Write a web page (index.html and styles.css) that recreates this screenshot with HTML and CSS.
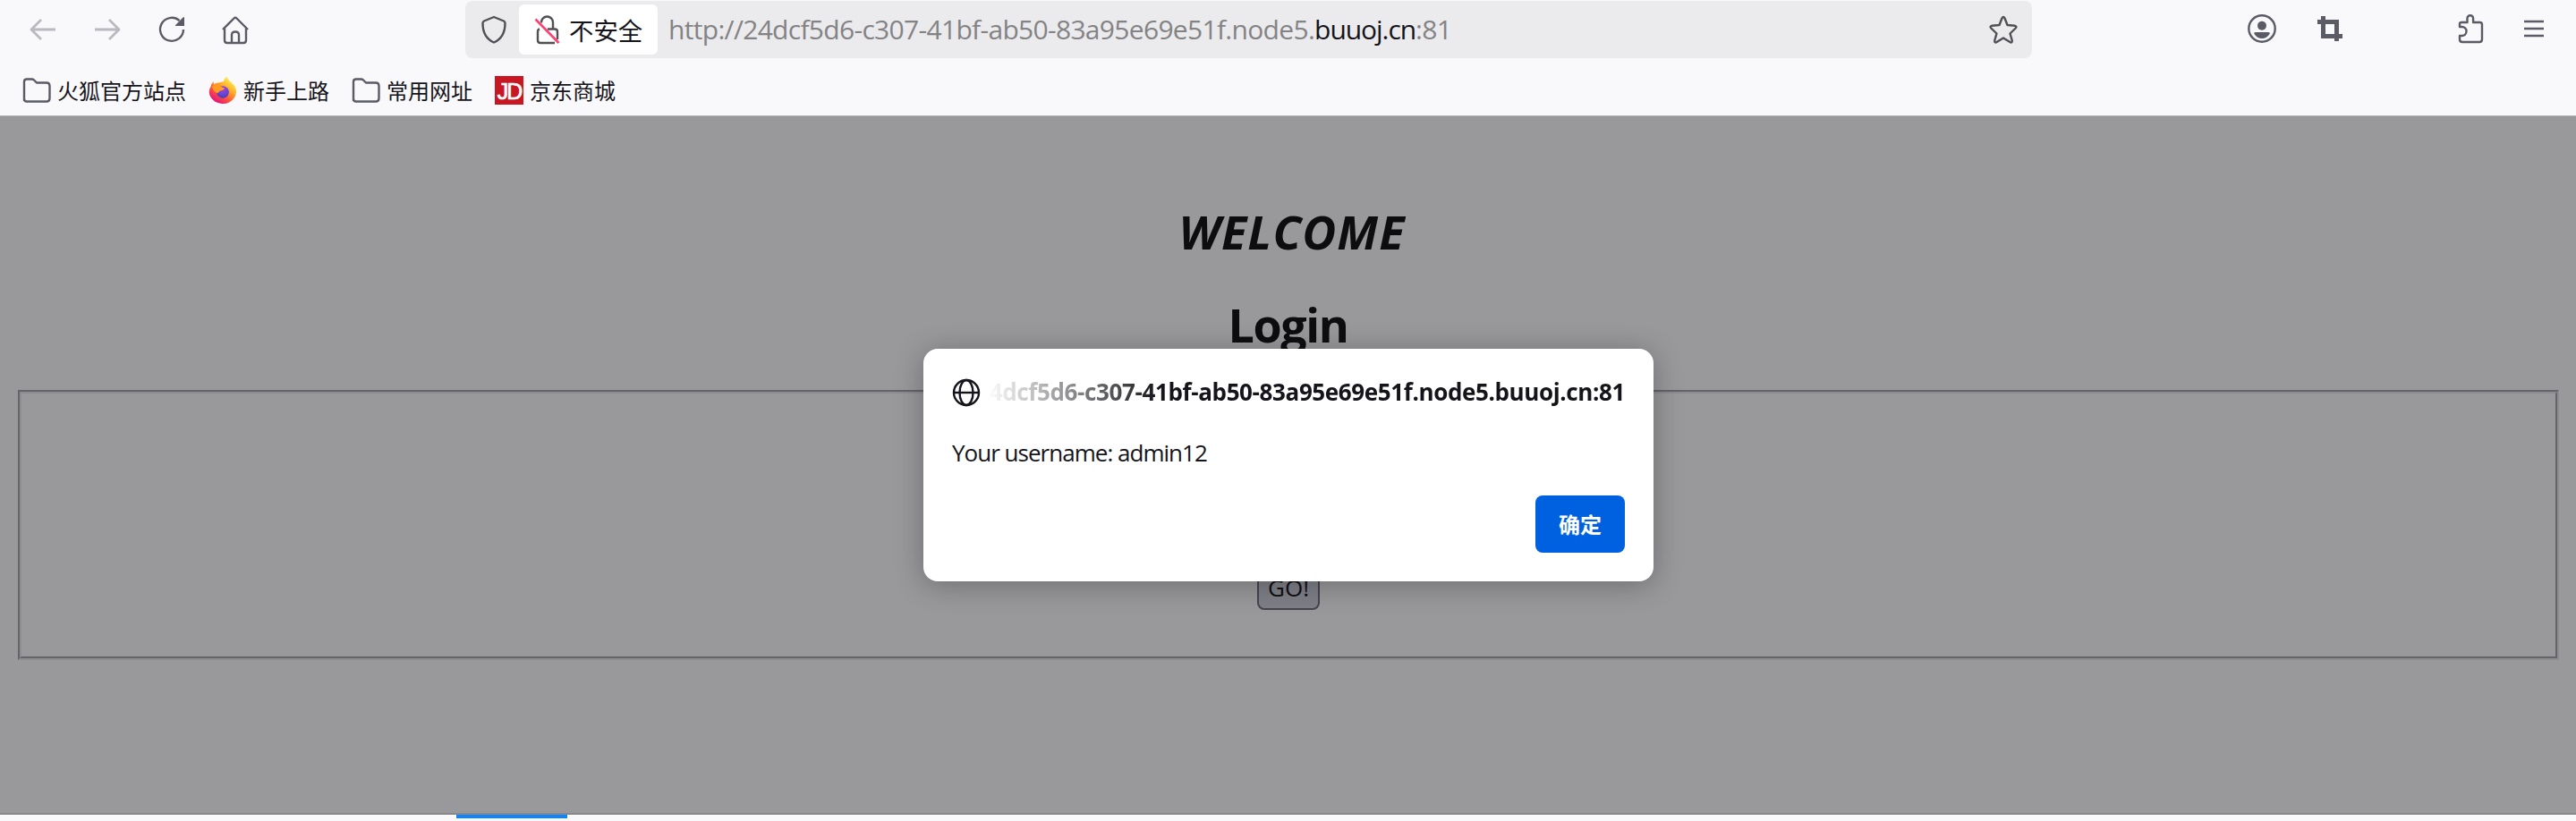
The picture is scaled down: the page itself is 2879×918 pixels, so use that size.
FILE: index.html
```html
<!DOCTYPE html>
<html lang="zh-CN">
<head>
<meta charset="utf-8">
<title>Login</title>
<link rel="stylesheet" href="styles.css">
</head>
<body>
<div class="window">
  <header class="chrome">
    <nav class="toolbar">
      <div class="nav-buttons">
        <svg class="icon disabled" viewBox="0 0 32 32"><path d="M30 17H3M14 6L3 17L14 28"/></svg>
        <svg class="icon disabled" viewBox="0 0 32 32"><path d="M2 17H29M18 6L29 17L18 28"/></svg>
        <svg class="icon" viewBox="0 0 32 32"><path d="M29 17A13 13 0 1 1 24.500 7"/><path class="fill" d="M30 3.500V13H20.500q-1 0-.4-1L28.500 3.500q1.500-1 1.500 0z"/></svg>
        <svg class="icon home" viewBox="0 0 32 32"><path d="M2 17L14.500 4.500q1.500-1.500 3 0L30 17M4 15.500V29q0 3 3 3H25q3 0 3-3V15.500M12 31.500V23q0-3.500 4-3.500t4 3.500v8.500"/></svg>
      </div>
      <div class="urlbar">
        <svg class="icon dark shield" viewBox="0 0 32 32"><path d="M16 2L27 6.500q1.500.8 1.500 2.500C28.500 19 25 26.500 16 30.500C7 26.500 3.500 19 3.500 9q0-1.700 1.500-2.500z"/></svg>
        <div class="identity">
          <svg class="icon dark" viewBox="0 0 32 32"><path d="M9 8.500V8a6.500 6.500 0 0 1 13 0v7.500M7 15.500Q5 16 5 18.500V28q0 3 3 3H24M16 15.500H24q3 0 3 3V27"/><path class="strike" d="M2.500 4.500L28.500 31"/></svg>
          <span>不安全</span>
        </div>
        <div class="url"><span class="u1">http://24dcf5d6-c307-41bf-ab50-83a95e69e51f.node5.</span><b class="u2">buuoj.cn</b><span class="u3">:81</span></div>
        <svg class="icon dark star" viewBox="0 0 32 32"><path d="M14.500 3.300q1.500-2.500 3 0L20.500 11L29 11.800q2.500.6.700 2.700L23.500 20.500L25.800 28.500q.1 2.800-2.400 1.600L16 25.500L8.600 30.100q-2.500 1.200-2.400-1.600L8.500 20.500L2.300 14.500q-1.800-2.100.7-2.700L11.500 11z"/></svg>
      </div>
      <div class="actions">
        <svg class="icon account" viewBox="0 0 32 32"><circle cx="16" cy="16" r="14.700"/><circle class="fill" cx="16" cy="12.700" r="5"/><path class="fill" d="M9 20H23q2.500 0 1.500 2Q21.500 27 16 27T7.500 22Q6.500 20 9 20z"/></svg>
        <svg class="icon crop" viewBox="0 0 32 32"><path class="block" d="M2 8.500H23.500V30M8.500 2V24.500H30"/></svg>
        <svg class="icon puzzle" viewBox="0 0 32 32"><path d="M4 14V10.500Q4 9 6 9H12.500V4.500a3.300 3.300 0 0 1 6.600 0V9H26.500Q29 9 29 11.500V28Q29 31 26 31H7Q4 31 4 28V24H6.500a5 5 0 0 0 0-10H4z"/></svg>
        <svg class="icon menu" viewBox="0 0 32 32"><path d="M5 8H27M5 16H27M5 24H27"/></svg>
      </div>
    </nav>
    <div class="bookmarks">
      <div class="bookmark"><svg class="icon" viewBox="0 0 32 32"><path d="M2 27V6.500Q2 3.500 5 3.500H10.500q1.500 0 2.500 1L16 7.500H27q3.500 0 3.500 3.500V25q0 3.500-3.500 3.500H5Q2 28.500 2 25z"/></svg><span>火狐官方站点</span></div>
      <div class="bookmark"><svg class="icon logo" viewBox="0 0 32 32">
        <defs>
          <linearGradient id="flame" x1=".85" y1=".1" x2=".25" y2=".95"><stop offset="0" stop-color="#fff44f"/><stop offset=".35" stop-color="#ffb02b"/><stop offset=".65" stop-color="#ff5a36"/><stop offset="1" stop-color="#e3107f"/></linearGradient>
          <radialGradient id="globe" cx=".5" cy=".25" r=".8"><stop offset="0" stop-color="#b13ae0"/><stop offset=".5" stop-color="#6b46d8"/><stop offset="1" stop-color="#423ab0"/></radialGradient>
        </defs>
        <path fill="url(#flame)" d="M2.500 12Q3 8.500 5.500 6l.5 3.500Q8 7.500 11 7.500L17 6Q17.500 2.500 20.500.5Q21 4 26 7.500q0 1.500 1 1Q31.500 13 31 19A15.300 14.500 0 0 1 .7 18Q.6 15 2.500 12z"/>
        <circle fill="url(#globe)" cx="16" cy="18" r="6.800"/>
        <path fill="#ff9b20" d="M4 12Q8 8 13 9q-.5 3 5 4.500q-.5 2.500-5 3l-2.500 2.500Q6 19 4 12z"/>
      </svg><span>新手上路</span></div>
      <div class="bookmark"><svg class="icon" viewBox="0 0 32 32"><path d="M2 27V6.500Q2 3.500 5 3.500H10.500q1.500 0 2.500 1L16 7.500H27q3.500 0 3.500 3.500V25q0 3.500-3.500 3.500H5Q2 28.500 2 25z"/></svg><span>常用网址</span></div>
      <div class="bookmark"><i class="jd">JD</i><span>京东商城</span></div>
    </div>
  </header>
  <main class="page">
    <h1 class="welcome">WELCOME</h1>
    <h1 class="login">Login</h1>
    <div class="frame"><div class="frame-inner"><button class="go">GO!</button></div></div>
    <section class="dialog">
      <div class="origin">
        <svg class="icon ink" viewBox="0 0 32 32"><circle cx="16" cy="16" r="14"/><ellipse cx="16" cy="16" rx="7.500" ry="14"/><path d="M2 16H30"/></svg>
        <div class="host"><span>24dcf5d6-c307-41bf-ab50-83a95e69e51f.node5.buuoj.cn:81</span></div>
      </div>
      <p class="message"><span>Your username: admin12</span></p>
      <button class="ok">确定</button>
    </section>
  </main>
  <footer class="below"><div class="tab-line"></div></footer>
</div>
</body>
</html>
```
FILE: styles.css
```css
* { box-sizing: border-box; }
body {
  margin: 0;
  background: #f9f9fb;
  color: #15141a;
  font-family: "Open Sans", "Noto Sans CJK SC", sans-serif;
}
button { font-family: inherit; color: inherit; }
.window { display: flex; flex-direction: column; width: 2879px; height: 918px; overflow: hidden; }
.icon {
  display: block;
  flex: none;
  width: 32px;
  height: 32px;
  fill: none;
  stroke: #5b5b66;
  stroke-width: 2.4;
  stroke-linejoin: round;
  overflow: visible;
}
.icon .fill { fill: #5b5b66; stroke: none; }
.icon .strike { stroke: #ff4070; stroke-width: 2.6; }
.icon .block { stroke-width: 5; stroke-linejoin: miter; }
.disabled { opacity: .4; stroke-width: 2.8; }
.dark { stroke: #505055; }
.ink { stroke: #15141a; }
.logo { stroke: none; }

.chrome { flex: none; height: 130px; border-bottom: 1px solid #b7b7b9; background: #f9f9fb; }
.toolbar { display: flex; height: 66px; padding-top: 1px; }
.nav-buttons { display: flex; gap: 40px; width: 520px; padding: 15px 0 0 32px; }
.home { margin-left: -1px; }
.urlbar {
  display: flex;
  align-items: center;
  width: 1751px;
  height: 64px;
  padding: 0 16px;
  border-radius: 8px;
  background: #ebebed;
}
.shield { margin-right: 12px; }
.identity {
  display: flex;
  align-items: center;
  gap: 8px;
  width: 155px;
  height: 56px;
  padding-left: 16px;
  border-radius: 6px;
  background: #fff;
  font: 27.4px/56px "Noto Sans CJK SC", sans-serif;
  white-space: nowrap;
}
.url { flex: 1; margin-left: 12px; font-size: 30px; line-height: 60px; color: #838385; white-space: nowrap; }
.u1 { letter-spacing: -.69px; }
.u2 { font-weight: 400; letter-spacing: -1.05px; color: #15141a; }
.u3 { letter-spacing: -.7px; }
.actions { display: flex; padding: 15px 0 0 241px; }
.crop { margin-left: 44px; }
.puzzle { margin-left: 125px; }
.menu { margin-left: 39px; }
.bookmarks { display: flex; gap: 25px; padding: 19px 0 0 25px; }
.bookmark { display: flex; align-items: center; gap: 7px; height: 32px; font: 24px/32px "Noto Sans CJK SC", sans-serif; white-space: nowrap; }
.jd {
  width: 32px;
  height: 32px;
  background: #c81623;
  color: #fff;
  font: 25px/34px "Liberation Sans", sans-serif;
  letter-spacing: -2px;
  text-align: center;
  -webkit-text-stroke: .7px #fff;
}

.page { position: relative; flex: none; height: 781px; border-bottom: 2px solid #88888b; background: #99999b; text-align: center; }
h1 { margin: 0; font-size: 52px; line-height: 70px; color: #0d0d10; }
.welcome { padding: 94px 0 0 9px; font-style: italic; letter-spacing: 1.1px; }
.login { margin-top: 34px; letter-spacing: -1.4px; }
.frame { height: 302px; margin: 38px 19px 0 20px; border: 2px solid; border-color: #656569 #8d8d91 #8d8d91 #656569; }
.frame-inner { display: flex; align-items: flex-end; justify-content: center; height: 100%; padding-bottom: 52px; border: 2px solid; border-color: #8d8d91 #656569 #656569 #8d8d91; }
.go { width: 70px; height: 50px; padding: 0; border: 2px solid #45454f; border-radius: 8px; background: #7f7f87; color: #0d0d10; font-size: 26px; line-height: 44px; }

.dialog {
  position: absolute;
  top: 260px;
  left: 1032px;
  display: flex;
  flex-direction: column;
  width: 816px;
  height: 260px;
  padding: 32px;
  border-radius: 16px;
  background: #fff;
  box-shadow: 0 4px 32px rgba(20, 20, 26, .32);
}
.origin { display: flex; align-items: center; gap: 7px; height: 34px; }
.host {
  display: flex;
  justify-content: flex-end;
  flex: 1;
  overflow: hidden;
  font-size: 26px;
  font-weight: 700;
  line-height: 34px;
  letter-spacing: -.38px;
  white-space: nowrap;
  margin-top: -2px;
  -webkit-mask-image: linear-gradient(to right, transparent, #000 192px);
  mask-image: linear-gradient(to right, transparent, #000 192px);
}
.message { margin: 30px 0 0; font-size: 26px; line-height: 40px; letter-spacing: -.98px; text-align: left; }
.ok { align-self: flex-end; width: 100px; height: 64px; margin-top: 28px; padding: 0; border: 0; border-radius: 8px; background: #0061e0; color: #fff; font: 700 24px/60px "Noto Sans CJK SC", sans-serif; }

.below { flex: 1; padding-left: 510px; background: #f9f9fb; }
.tab-line { width: 124px; height: 4px; background: #0a84ff; }
```
